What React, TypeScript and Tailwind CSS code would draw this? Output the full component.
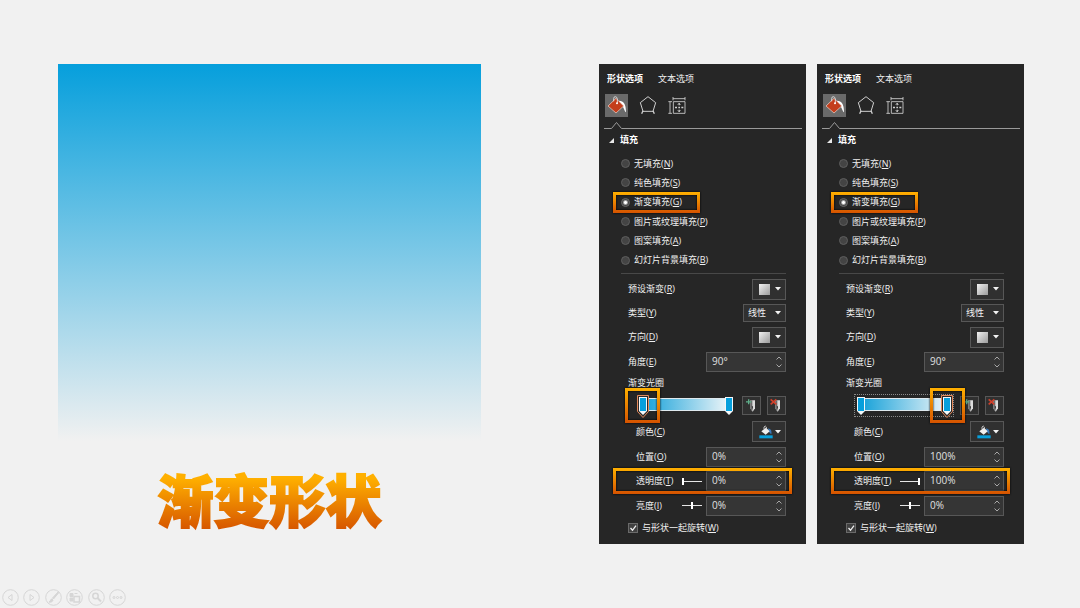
import { useId, useState } from 'react';
import type { ReactNode } from 'react';

const FRAME =
  'pointer-events-none absolute border-[3px] [border-image:linear-gradient(#ffb000,#d55300)_3] drop-shadow-[0_0_1px_#000]';

type PanelProps = {
  name: string;
  selectedStop: 'start' | 'end';
  position: string;
  transparency: string;
};

function Label({ text, mnemonic }: { text: string; mnemonic: string }) {
  return (
    <>
      {text}(<span className="underline underline-offset-1">{mnemonic}</span>)
    </>
  );
}

function BucketIcon() {
  return (
    <svg viewBox="0 0 69 69" className="size-full" aria-hidden="true">
      <path d="M42 20c14 0 21 10 21 35-3-1-5-9-9-16l-12-14z" fill="#fff" />
      <path d="M9 36 33 13l23 23-23 21z" fill="#c43e1c" stroke="#efd9d2" strokeWidth="2" />
      <path d="M26 22V14q0-6 5-6t6 7v12" fill="none" stroke="#e6e6e6" strokeWidth="2.5" />
      <circle cx="36" cy="28" r="3" fill="#fff" />
    </svg>
  );
}

function PentagonIcon() {
  return (
    <svg viewBox="0 0 54 69" className="h-full w-[18px]" fill="none" stroke="#cfcfcf" strokeWidth="3" aria-hidden="true">
      <path d="M27 8 50 26 42 52H12L4 26z" />
      <path d="M12 50 8 59M42 50l4 9" strokeWidth="4" />
    </svg>
  );
}

function SizeIcon() {
  return (
    <svg viewBox="0 0 54 69" className="h-full w-[18px]" fill="none" stroke="#cfcfcf" strokeWidth="2.6" aria-hidden="true">
      <path d="M6 23v35M1 23h11M1 58h11" />
      <path d="M15 14h36M15 9v10M51 9v10" />
      <path d="M16 23h35v35H16z" />
      <path d="M33.500 28v6M33.500 47v6M21 40.500h6M40 40.500h6M31 40.500h5" strokeWidth="4" />
      <path d="m29 32 4.500-4.500L38 32M29 49l4.500 4.500L38 49" strokeWidth="2" />
    </svg>
  );
}

function Caret() {
  return (
    <svg viewBox="0 0 6 4" className="h-1 w-1.5" aria-hidden="true">
      <path d="M0 0h6L3 3.500z" fill="#f2f2f2" />
    </svg>
  );
}

function Chevron({ up }: { up?: boolean }) {
  return (
    <svg viewBox="0 0 6 4" className="h-1 w-1.5" fill="none" stroke="#a8a8a8" aria-hidden="true">
      <path d={up ? 'M.5 3.500 3 1l2.500 2.500' : 'M.5.5 3 3 5.500.5'} />
    </svg>
  );
}

function PenIcon({ remove }: { remove?: boolean }) {
  return (
    <svg viewBox="0 0 51 51" className="size-full" aria-hidden="true">
      <path d="M22 10h14v24l-7 10-7-10z" fill="#dcdcdc" />
      <path d="M22 10h6v34l-6-9z" fill="#6c6c6c" />
      <path d="M26 28h4v12z" fill="#333" />
      {remove ? (
        <path d="m8 7 17 15M25 7 8 22" stroke="#d0402b" strokeWidth="5" />
      ) : (
        <path d="M17 7v15M9 14.500h16" stroke="#5fae8a" strokeWidth="4" />
      )}
    </svg>
  );
}

function FillIcon() {
  return (
    <svg viewBox="0 0 42 42" className="size-[14px]" aria-hidden="true">
      <path d="M27 10q13 2 10 18-5-3-8-9z" fill="#3a78b8" />
      <path d="m7 19 14-11 11 11-12 10z" fill="#f0f0f0" />
      <path d="M15 13V6q4-6 7 0v8" fill="none" stroke="#d8d8d8" strokeWidth="2.500" />
      <path d="M1 31h40v9H1z" fill="#069fdc" />
    </svg>
  );
}

function Row({ height, inset, children }: { height: string; inset?: boolean; children: ReactNode }) {
  return (
    <div className={`relative flex items-center justify-between pr-5 ${height} ${inset ? 'pl-[37px]' : 'pl-[29px]'}`}>
      {children}
    </div>
  );
}

function PickerButton({ label, children }: { label: string; children: ReactNode }) {
  return (
    <button
      type="button"
      aria-label={label}
      className="flex h-[21px] w-[34px] items-center justify-between border border-[#575757] bg-[#303030] pr-1 pl-1.5"
    >
      {children}
      <Caret />
    </button>
  );
}

function Swatch() {
  return <span className="size-[11px] bg-linear-to-br from-[#f2f2f2] to-[#9b9b9b]" />;
}

function NumberBox({ id, initial }: { id: string; initial: string }) {
  const [value, setValue] = useState(initial);
  const step = (delta: number) => setValue((v) => `${parseInt(v, 10) + delta}${v.replace(/[-\d]/g, '')}`);
  return (
    <div className="flex h-5 w-20 border border-[#575757] bg-[#353535]">
      <input
        id={id}
        value={value}
        onChange={(e) => setValue(e.target.value)}
        className="w-0 flex-1 bg-transparent pb-0.5 pl-[5px] text-[10px] leading-4 text-[#e0e0e0] outline-none"
      />
      <div className="flex w-3 flex-col items-center justify-between py-[3px]">
        <button type="button" aria-label="增加" onClick={() => step(1)}>
          <Chevron up />
        </button>
        <button type="button" aria-label="减少" onClick={() => step(-1)}>
          <Chevron />
        </button>
      </div>
    </div>
  );
}

function MiniSlider({ label, value }: { label: string; value: number }) {
  return (
    <input
      type="range"
      aria-label={label}
      defaultValue={value}
      className="mr-1 ml-auto h-[7px] w-5 appearance-none bg-transparent [&::-webkit-slider-runnable-track]:h-px [&::-webkit-slider-runnable-track]:bg-[#e6e6e6] [&::-webkit-slider-thumb]:-mt-[3px] [&::-webkit-slider-thumb]:h-[7px] [&::-webkit-slider-thumb]:w-[2px] [&::-webkit-slider-thumb]:appearance-none [&::-webkit-slider-thumb]:bg-white"
    />
  );
}

function Stop({ selected, side }: { selected: boolean; side: 'start' | 'end' }) {
  return (
    <button
      type="button"
      aria-label={side === 'start' ? '起始光圈' : '结束光圈'}
      className={`absolute top-0 h-[23px] w-3 ${side === 'start' ? 'left-0' : 'right-0'}`}
    >
      <svg viewBox="0 0 12 23" className="size-full" aria-hidden="true">
        {selected && <path d="M.5.5h11v16L6 22.500.5 16.500z" fill="#2a2a2a" stroke="#e58a5c" />}
        <path d="M2 2h8v14l-4 4-4-4z" fill="#f4f8fa" />
        <path d="M3 3h6v13H3z" fill="#069fdc" />
      </svg>
    </button>
  );
}

const FILLS = [
  ['无填充', 'N'],
  ['纯色填充', 'S'],
  ['渐变填充', 'G'],
  ['图片或纹理填充', 'P'],
  ['图案填充', 'A'],
  ['幻灯片背景填充', 'B'],
];

function FormatPanel({ name, selectedStop, position, transparency }: PanelProps) {
  const id = useId();
  const atEnd = selectedStop === 'end';
  return (
    <section
      aria-label={name}
      className="w-[207px] shrink-0 bg-[#262626] pt-2 pb-[7px] text-[9px] leading-[14px] text-[#f0f0f0]"
    >
      <div className="flex gap-[15px] pl-2">
        <button type="button" className="font-bold text-white">
          形状选项
        </button>
        <button type="button">文本选项</button>
      </div>

      <div className="mt-2 flex h-[23px] gap-[11px] pl-1.5">
        <button type="button" aria-label="填充与线条" className="w-[23px] bg-[#6a6a6a]">
          <BucketIcon />
        </button>
        <button type="button" aria-label="效果">
          <PentagonIcon />
        </button>
        <button type="button" aria-label="大小与属性">
          <SizeIcon />
        </button>
      </div>

      <div className="mt-1 flex h-2 items-end pr-1 pl-[5px]">
        <svg viewBox="0 0 18 8" className="h-2 w-[18px]" fill="none" stroke="#9a9a9a" aria-hidden="true">
          <path d="M0 7.500h7.500L12.500 1.500l5 6H18" />
        </svg>
        <div className="h-px flex-1 bg-[#9a9a9a]" />
      </div>

      <h2 className="mt-[3px] flex h-4 items-center gap-1.5 pl-2.5 font-bold text-white">
        <svg viewBox="0 0 5 5" className="size-[5px]" aria-hidden="true">
          <path d="M5 0v5H0z" fill="#e8e8e8" />
        </svg>
        填充
      </h2>

      <fieldset className="mt-1.5 grid h-[116px] grid-rows-6 pl-[22px]">
        {FILLS.map(([text, key]) => (
          <div key={key} className="relative flex items-center">
            <label className="flex items-center gap-1">
              <input
                type="radio"
                name={`${id}fill`}
                defaultChecked={key === 'G'}
                className="size-[9px] appearance-none rounded-full border border-[#5e5e5e] bg-[#444] checked:border-[#666] checked:bg-[radial-gradient(#fff_0_1px,#444_3px)]"
              />
              <span>
                <Label text={text} mnemonic={key} />
              </span>
            </label>
            {key === 'G' && <span className={`${FRAME} -inset-y-px -left-2 w-[87px]`} />}
          </div>
        ))}
      </fieldset>

      <div className="mt-[3px] mr-5 mb-[3px] ml-[22px] h-px bg-[#484848]" />

      <Row height="h-6">
        <span>
          <Label text="预设渐变" mnemonic="R" />
        </span>
        <PickerButton label="预设渐变">
          <Swatch />
        </PickerButton>
      </Row>
      <Row height="h-6">
        <label htmlFor={`${id}type`}>
          <Label text="类型" mnemonic="Y" />
        </label>
        <div className="relative">
          <select
            id={`${id}type`}
            className="block h-[18px] w-[43px] appearance-none border border-[#575757] bg-[#303030] pl-1 outline-none"
          >
            <option>线性</option>
          </select>
          <span className="pointer-events-none absolute inset-y-0 right-[5px] flex items-center">
            <Caret />
          </span>
        </div>
      </Row>
      <Row height="h-6">
        <span>
          <Label text="方向" mnemonic="D" />
        </span>
        <PickerButton label="方向">
          <Swatch />
        </PickerButton>
      </Row>
      <Row height="h-[25px]">
        <label htmlFor={`${id}angle`}>
          <Label text="角度" mnemonic="E" />
        </label>
        <NumberBox id={`${id}angle`} initial="90°" />
      </Row>
      <Row height="h-[17px]">
        <span>渐变光圈</span>
      </Row>

      <Row height="h-7" inset>
        <div className={`relative mr-1.5 h-[23px] flex-1 border border-dotted ${atEnd ? 'border-[#8a8a8a]' : 'border-transparent'}`}>
          <div className="mx-1 mt-[3px] h-[13px] border-y border-[#dfe9ee] bg-linear-to-r/srgb from-[#109fd8] to-[#f3f7f9]" />
          <Stop side="start" selected={!atEnd} />
          <Stop side="end" selected={atEnd} />
          <span className={`${FRAME} -top-[7px] size-[35px] ${atEnd ? '-right-3' : '-left-3'}`} />
        </div>
        <div className="flex gap-1.5">
          <button type="button" aria-label="添加渐变光圈" className="size-[19px] border border-[#575757] bg-[#303030]">
            <PenIcon />
          </button>
          <button type="button" aria-label="删除渐变光圈" className="size-[19px] border border-[#575757] bg-[#303030]">
            <PenIcon remove />
          </button>
        </div>
      </Row>

      <Row height="h-[25px]" inset>
        <span>
          <Label text="颜色" mnemonic="C" />
        </span>
        <PickerButton label="颜色">
          <FillIcon />
        </PickerButton>
      </Row>
      <Row height="h-[25px]" inset>
        <label htmlFor={`${id}pos`}>
          <Label text="位置" mnemonic="O" />
        </label>
        <NumberBox id={`${id}pos`} initial={position} />
      </Row>
      <Row height="h-6" inset>
        <label htmlFor={`${id}alpha`}>
          <Label text="透明度" mnemonic="T" />
        </label>
        <MiniSlider label="透明度" value={parseInt(transparency, 10)} />
        <NumberBox id={`${id}alpha`} initial={transparency} />
        <span className={`${FRAME} -inset-y-px right-3.5 left-3.5`} />
      </Row>
      <Row height="h-[25px]" inset>
        <label htmlFor={`${id}light`}>
          <Label text="亮度" mnemonic="I" />
        </label>
        <MiniSlider label="亮度" value={50} />
        <NumberBox id={`${id}light`} initial="0%" />
      </Row>
      <Row height="h-[19px]">
        <label className="flex items-center gap-1">
          <span className="relative flex">
            <input
              type="checkbox"
              defaultChecked
              className="peer size-[10px] appearance-none border border-[#6a6a6a] bg-[#404040]"
            />
            <svg
              viewBox="0 0 10 10"
              className="pointer-events-none absolute inset-0 hidden size-[10px] peer-checked:block"
              fill="none"
              stroke="#f0f0f0"
              strokeWidth="1.3"
              aria-hidden="true"
            >
              <path d="m2.500 5 2 2.300L8 2.700" />
            </svg>
          </span>
          <span>
            <Label text="与形状一起旋转" mnemonic="W" />
          </span>
        </label>
      </Row>
    </section>
  );
}

const SHOW_CONTROLS: [string, ReactNode][] = [
  ['上一张', <path key="p" d="M10 5.500v6l-4-3z" />],
  ['下一张', <path key="n" d="M7 5.500v6l4-3z" />],
  [
    '画笔',
    <g key="d">
      <path d="m13 3-5.500 6 1 1L13.500 4z" fill="#d6d6d6" />
      <path d="M7 10c-2 0-1 2.500-3 3 2 .5 4-.5 4-2z" fill="#d6d6d6" />
    </g>,
  ],
  [
    '查看所有幻灯片',
    <g key="a">
      <path d="M4 4.500h3v3H4zM8.500 4.500h3M4 9h3v3H4z" fill="#d6d6d6" />
      <path d="M8 7.500h5.500v5.500H8z" strokeWidth="1.500" />
    </g>,
  ],
  [
    '放大',
    <g key="z" strokeWidth="1.500">
      <circle cx="7.500" cy="7" r="2.700" />
      <path d="m9.500 9 3.500 3.500" strokeWidth="2" />
    </g>,
  ],
  [
    '更多选项',
    <g key="m">
      <circle cx="5" cy="8.500" r="1" />
      <circle cx="8.500" cy="8.500" r="1" />
      <circle cx="12" cy="8.500" r="1" />
    </g>,
  ],
];

export default function App() {
  return (
    <div className="flex min-h-screen flex-col bg-[#f1f1f1] font-['Open_Sans','Noto_Sans_CJK_SC',sans-serif]">
      <main className="flex flex-1 items-start gap-[118px] pt-16 pr-14 pl-[58px]">
        <div className="flex-1">
          <div className="h-[377px] bg-linear-to-b/srgb from-[#069fdc] to-[#f1f1f1]" />
          <h1 className="mt-[17px] bg-linear-to-b/srgb from-[#ffb000] from-25% to-[#d65500] to-90% bg-clip-text text-center font-['Noto_Sans_CJK_SC',sans-serif] text-[56px] leading-[80px] font-black whitespace-nowrap text-transparent [-webkit-text-stroke:2px_transparent]">
            渐变形状
          </h1>
        </div>
        <div className="flex gap-[11px]">
          <FormatPanel name="起始光圈设置" selectedStop="start" position="0%" transparency="0%" />
          <FormatPanel name="结束光圈设置" selectedStop="end" position="100%" transparency="100%" />
        </div>
      </main>
      <nav aria-label="放映控制" className="mb-0.5 ml-0.5 flex w-[124px] justify-between">
        {SHOW_CONTROLS.map(([label, icon]) => (
          <button key={label} type="button" aria-label={label} className="size-[17px]">
            <svg viewBox="0 0 17 17" className="size-full" fill="none" stroke="#d6d6d6" aria-hidden="true">
              <circle cx="8.500" cy="8.500" r="7.800" />
              {icon}
            </svg>
          </button>
        ))}
      </nav>
    </div>
  );
}
